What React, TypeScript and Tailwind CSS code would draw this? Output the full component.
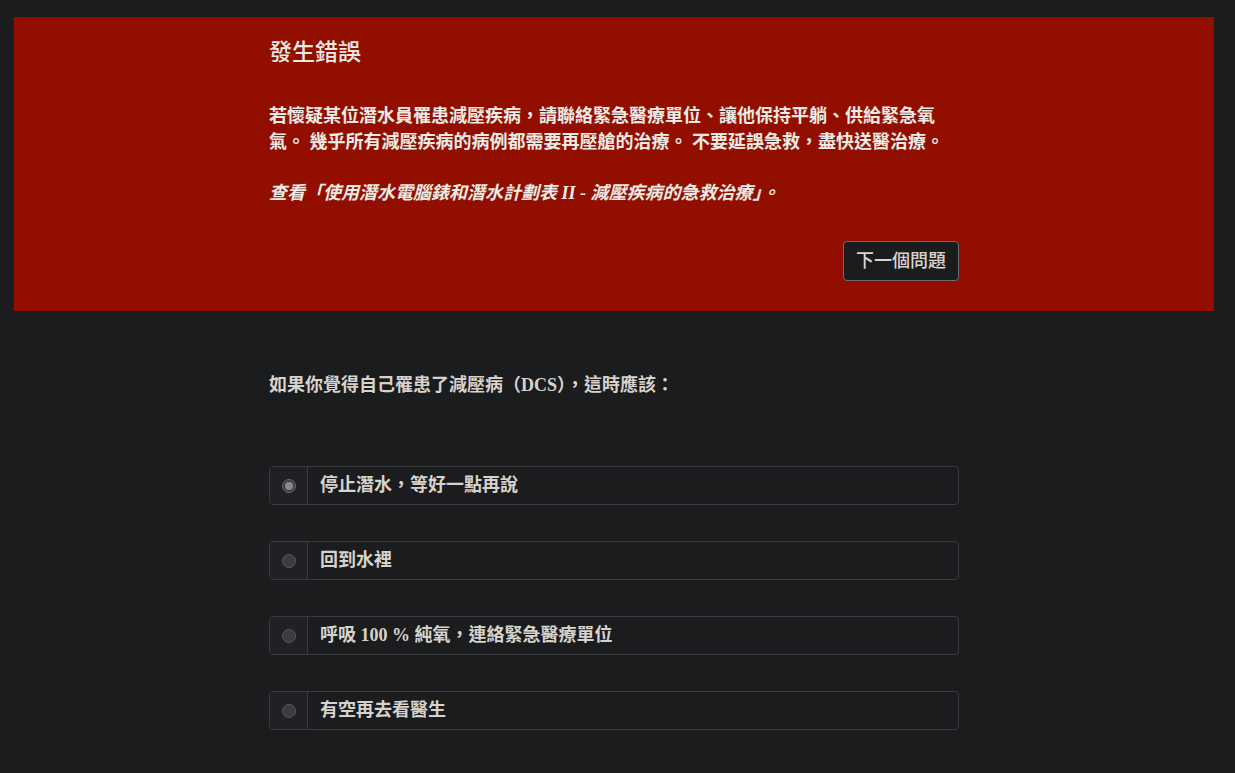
import * as React from "react";

const serif = "font-['Liberation_Serif','Noto_Sans_CJK_TC',serif]";
const sans = "font-['Liberation_Sans','Noto_Sans_CJK_TC',sans-serif]";

const options = [
  { id: 1, label: "停止潛水，等好一點再說", checked: true },
  { id: 2, label: "回到水裡", checked: false },
  { id: 3, label: "呼吸 100 % 純氧，連絡緊急醫療單位", checked: false },
  { id: 4, label: "有空再去看醫生", checked: false },
];

function Option({ label, checked }: { label: string; checked: boolean }) {
  return (
    <label className="flex h-[39px] w-full overflow-hidden rounded-[4px] border border-[#393b3e] bg-[#1b1c1e]">
      <span className="flex w-[38px] shrink-0 items-center justify-center border-r border-[#393b3e] bg-[#202124]">
        <span
          className={
            "flex h-[14px] w-[14px] items-center justify-center rounded-full border " +
            (checked ? "border-[#6b6b6b] bg-[#3d3e40]" : "border-[#55575a] bg-[#3b3c3e]")
          }
        >
          {checked && <span className="h-[8px] w-[8px] rounded-full bg-[#8a8a8a]" />}
        </span>
      </span>
      <span className={`flex items-center pl-[12px] text-[18px] font-bold text-[#d6d2cc] ${serif}`}>
        {label}
      </span>
    </label>
  );
}

export default function App() {
  return (
    <div className="min-h-[773px] bg-[#1b1c1e] pl-[14px] pt-[17px] pb-[40px]">
      <div className="w-[1200px]">
        <section className="bg-[#920f00] pt-[22px] pb-[30px]">
          <div className="mx-auto w-[690px]">
            <h2 className={`text-[23px] font-medium leading-[26px] text-[#ece9e5] ${sans}`}>發生錯誤</h2>
            <div className={`mt-[38px] text-[18px] font-bold leading-[26px] text-[#eeeae6] ${serif}`}>
              <p>
                若懷疑某位潛水員罹患減壓疾病，請聯絡緊急醫療單位、讓他保持平躺、供給緊急氧氣。 幾乎所有減壓疾病的病例都需要再壓艙的治療。 不要延誤急救，盡快送醫治療。
              </p>
              <p className="mt-[25px] italic">查看「使用潛水電腦錶和潛水計劃表 II - 減壓疾病的急救治療」。</p>
            </div>
            <div className="mt-[35px] flex justify-end">
              <button
                className={`h-[40px] rounded-[4px] border border-[#6a6c70] bg-[#1b1c1e] px-[12px] text-[18px] font-medium text-[#d8d4ce] ${sans}`}
              >
                下一個問題
              </button>
            </div>
          </div>
        </section>

        <main className="mx-auto w-[690px]">
          <p className={`mt-[61px] text-[18px] font-bold leading-[26px] text-[#d6d2cc] ${serif}`}>
            如果你覺得自己罹患了減壓病（DCS），這時應該：
          </p>
          <div className="mt-[68px] flex flex-col gap-[36px]">
            {options.map((o) => (
              <Option key={o.id} label={o.label} checked={o.checked} />
            ))}
          </div>
        </main>
      </div>
    </div>
  );
}
